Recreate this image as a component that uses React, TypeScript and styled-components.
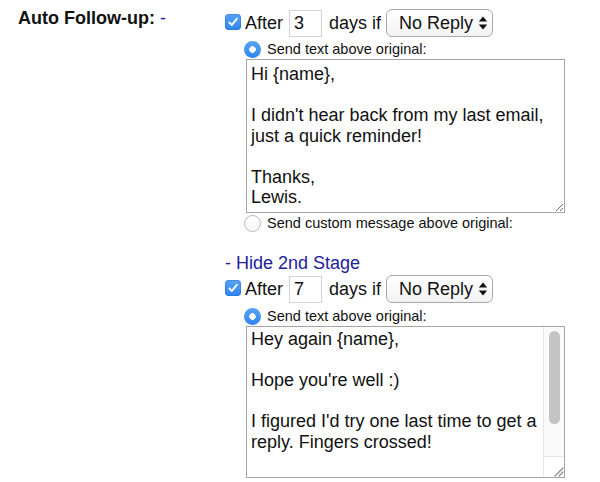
import React from "react";
import styled, { createGlobalStyle } from "styled-components";

const Global = createGlobalStyle`
  html, body { margin: 0; padding: 0; background: #ffffff; }
  body { font-family: "Liberation Sans", Arial, Helvetica, sans-serif; color: #111; }
`;

const Page = styled.div`
  display: flex;
  align-items: flex-start;
  padding-left: 18px;
  width: 600px;
  height: 482px;
  box-sizing: border-box;
  overflow: hidden;
`;

const LabelCell = styled.div`
  width: 207px;
  flex: none;
  margin-top: 8px;
  font-size: 18px;
  line-height: 21px;
  font-weight: bold;
  color: #111;
`;

const LinkDash = styled.span`
  color: #22229c;
  font-weight: normal;
`;

const Column = styled.div`
  display: flex;
  flex-direction: column;
  align-items: flex-start;
`;

const StageRow = styled.div<{ $top: number }>`
  display: flex;
  align-items: center;
  height: 28px;
  margin-top: ${(p) => p.$top}px;
  font-size: 18px;
  color: #111;
`;

const CheckBox = styled.span`
  width: 16px;
  height: 16px;
  border-radius: 4px;
  background: linear-gradient(#5aa2f6, #2f86f0);
  display: inline-flex;
  align-items: center;
  justify-content: center;
  margin-right: 4px;
  margin-top: -3px;
  box-shadow: inset 0 0 0 1px rgba(30, 100, 200, 0.35);
`;

const Word = styled.span<{ $ml?: number }>`
  margin-left: ${(p) => p.$ml ?? 0}px;
  line-height: 21px;
`;

const DayBox = styled.div`
  width: 27px;
  height: 25px;
  border: 1px solid #d4d4d4;
  background: #fff;
  margin-left: 6px;
  padding-left: 4px;
  box-sizing: content-box;
  font-size: 18px;
  line-height: 25px;
  color: #111;
`;

const SelectWrap = styled.div`
  position: relative;
  margin-left: 5px;
  width: 107px;
  height: 28px;
`;

const Select = styled.select`
  appearance: none;
  -webkit-appearance: none;
  width: 107px;
  height: 28px;
  box-sizing: border-box;
  border: 1px solid #a9a9a9;
  border-radius: 6px;
  background: linear-gradient(#ffffff, #f3f3f3);
  padding: 0 0 0 12px;
  font-family: "Liberation Sans", Arial, Helvetica, sans-serif;
  font-size: 18px;
  color: #111;
  outline: none;
`;

const Arrows = styled.svg`
  position: absolute;
  right: 5px;
  top: 7px;
  pointer-events: none;
`;

const RadioRow = styled.div<{ $top: number }>`
  display: flex;
  align-items: center;
  height: 18px;
  margin-top: ${(p) => p.$top}px;
  margin-left: 19px;
  font-size: 14.5px;
  color: #111;
`;

const Radio = styled.span<{ $on: boolean }>`
  width: 17px;
  height: 17px;
  border-radius: 50%;
  box-sizing: border-box;
  margin-right: 6px;
  flex: none;
  background: ${(p) =>
    p.$on
      ? "radial-gradient(circle, #ffffff 0 3px, transparent 3.6px), linear-gradient(#5aa2f6, #2f86f0)"
      : "linear-gradient(#ffffff, #f6f6f6)"};
  border: ${(p) => (p.$on ? "none" : "1px solid #b9b9b9")};
`;

const MessageBox = styled.div`
  position: relative;
  margin-left: 21px;
  margin-top: 1px;
  width: 319px;
`;

const Message = styled.textarea<{ $pad: number; $padRight: number }>`
  display: block;
  width: 319px;
  box-sizing: border-box;
  border: 1px solid #a6a6a6;
  background: #fff;
  padding: ${(p) => p.$pad}px ${(p) => p.$padRight}px 0 4px;
  margin: 0;
  font-family: "Liberation Sans", Arial, Helvetica, sans-serif;
  font-size: 18px;
  line-height: 20.5px;
  color: #111;
  resize: both;
  outline: none;
  overflow: hidden;
`;

const ScrollTrack = styled.div`
  position: absolute;
  top: 1px;
  right: 1px;
  bottom: 1px;
  width: 21px;
  box-sizing: border-box;
  background: #fafafa;
  border-left: 1px solid #e6e6e6;
  display: flex;
  flex-direction: column;
  pointer-events: none;
`;

const ThumbArea = styled.div`
  flex: 1;
  padding: 4px 4px 0 5px;
`;

const Thumb = styled.div`
  height: 93px;
  border-radius: 6px;
  background: #c4c4c4;
`;

const Corner = styled.div`
  height: 20px;
  border-top: 1px solid #e6e6e6;
  background: #fff;
  display: flex;
  align-items: flex-end;
  justify-content: flex-end;
`;

const HideLink = styled.div`
  margin-top: 21px;
  font-size: 18px;
  line-height: 21px;
  color: #22229c;
`;

const Check = () => (
  <svg width="12" height="12" viewBox="0 0 12 12">
    <path d="M2.3 6.4 L4.8 9 L9.8 2.8" fill="none" stroke="#fff" strokeWidth="1.9" strokeLinecap="round" strokeLinejoin="round" />
  </svg>
);

const Grip = () => (
  <svg width="12" height="12" viewBox="0 0 12 12">
    <path d="M3 11 L11 3 M7 11 L11 7" stroke="#8a8a8a" strokeWidth="1.2" strokeLinecap="round" />
  </svg>
);

const Stage = ({ top, days }: { top: number; days: string }) => (
  <StageRow $top={top}>
    <CheckBox>
      <Check />
    </CheckBox>
    <Word>After</Word>
    <DayBox>{days}</DayBox>
    <Word $ml={7}>days if</Word>
    <SelectWrap>
      <Select defaultValue="noreply">
        <option value="noreply">No Reply</option>
        <option value="always">Always</option>
      </Select>
      <Arrows width="10" height="14" viewBox="0 0 10 14">
        <path d="M5 0.5 L9.2 5.6 L0.8 5.6 Z" fill="#111" />
        <path d="M5 13.5 L9.2 8.4 L0.8 8.4 Z" fill="#111" />
      </Arrows>
    </SelectWrap>
  </StageRow>
);

const first = "Hi {name},\n\nI didn't hear back from my last email, just a quick reminder!\n\nThanks,\nLewis.";
const second =
  "Hey again {name},\n\nHope you're well :)\n\nI figured I'd try one last time to get a reply. Fingers crossed!\n\n\nThanks,\nLewis.\n";

export default function App() {
  return (
    <>
      <Global />
      <Page>
        <LabelCell>
          Auto Follow-up: <LinkDash>-</LinkDash>
        </LabelCell>
        <Column>
          <Stage top={9} days="3" />
          <RadioRow $top={3}>
            <Radio $on />
            Send text above original:
          </RadioRow>
          <MessageBox>
            <Message $pad={4} $padRight={4} style={{ height: 154 }} defaultValue={first} />
          </MessageBox>
          <RadioRow $top={1}>
            <Radio $on={false} />
            Send custom message above original:
          </RadioRow>
          <HideLink>- Hide 2nd Stage</HideLink>
          <Stage top={1} days="7" />
          <RadioRow $top={4}>
            <Radio $on />
            Send text above original:
          </RadioRow>
          <MessageBox>
            <Message $pad={2} $padRight={25} style={{ height: 152 }} defaultValue={second} />
            <ScrollTrack>
              <ThumbArea>
                <Thumb />
              </ThumbArea>
              <Corner>
                <Grip />
              </Corner>
            </ScrollTrack>
          </MessageBox>
          <RadioRow $top={3}>
            <Radio $on={false} />
            Send custom message above original:
          </RadioRow>
        </Column>
      </Page>
    </>
  );
}
